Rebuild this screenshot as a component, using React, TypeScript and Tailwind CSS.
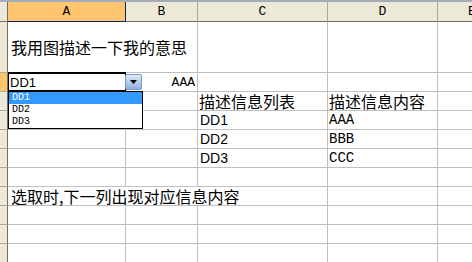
import React from "react";

const CJK = { fontFamily: '"Noto Sans CJK SC", "Noto Sans", sans-serif' };
const MONO = { fontFamily: '"Liberation Mono", "DejaVu Sans Mono", monospace' };
const SANS = { fontFamily: '"Liberation Sans", Arial, sans-serif' };

const widths = ["w-[118px]", "w-[72px]", "w-[130px]", "w-[110px]", "w-[68px]"];

function RowHead({ h, active }: { h: string; active?: boolean }) {
  return (
    <div
      className={`${h} w-[8px] shrink-0 border-r border-b border-r-[#716f64] border-b-[#aca899] ${
        active ? "bg-[#ffc46e]" : "bg-[#ece9d8]"
      }`}
    />
  );
}

function Cell({
  w,
  children,
  className = "",
  style,
}: {
  w: string;
  children?: React.ReactNode;
  className?: string;
  style?: React.CSSProperties;
}) {
  return (
    <div
      className={`${w} shrink-0 border-r border-b border-[#c0c0c0] flex items-center leading-none whitespace-nowrap text-black ${className}`}
      style={style}
    >
      {children}
    </div>
  );
}

export default function App() {
  return (
    <div className="relative w-[472px] h-[262px] overflow-hidden bg-white">
      <div className="h-[2px] bg-[#a4abbb]" />
      {/* column headers */}
      <div className="flex h-[20px]" style={MONO}>
        <div className="w-[8px] shrink-0 bg-[#ece9d8] border-r border-b border-[#716f64]" />
        <div className="w-[118px] shrink-0 bg-[#ffc46e] border-r border-b border-[#0a246a] flex items-center justify-center text-[13px] text-black">
          A
        </div>
        {["B", "C", "D"].map((l, i) => (
          <div
            key={l}
            className={`${widths[i + 1]} shrink-0 bg-[#ece9d8] border-r border-b border-r-[#aca899] border-b-[#716f64] flex items-center justify-center text-[13px] text-black`}
          >
            {l}
          </div>
        ))}
        <div className="w-[34px] shrink-0 overflow-hidden bg-[#ece9d8] border-b border-b-[#716f64] flex items-center text-[13px] text-black">
          <span className="pl-[30px]">E</span>
        </div>
      </div>

      {/* row 1 */}
      <div className="flex h-[51px]">
        <RowHead h="h-[51px]" />
        <div
          className="w-[190px] shrink-0 border-r border-b border-[#c0c0c0] flex items-center pl-[3px] text-[16px] leading-none text-black whitespace-nowrap"
          style={CJK}
        >
          我用图描述一下我的意思
        </div>
        <Cell w={widths[2]} />
        <Cell w={widths[3]} />
        <Cell w={widths[4]} />
      </div>

      {/* row 2 */}
      <div className="flex h-[19px]">
        <RowHead h="h-[19px]" active />
        <Cell w={widths[0]} />
        <Cell w={widths[1]} className="justify-end pr-[2px] text-[13px]" style={MONO}>
          AAA
        </Cell>
        <Cell w={widths[2]} />
        <Cell w={widths[3]} />
        <Cell w={widths[4]} />
      </div>

      {/* row 3 */}
      <div className="flex h-[19px]">
        <RowHead h="h-[19px]" />
        <Cell w={widths[0]} />
        <Cell w={widths[1]} />
        <Cell w={widths[2]} className="pl-[1px] text-[16px]" style={CJK}>
          描述信息列表
        </Cell>
        <Cell w={widths[3]} className="pl-[1px] text-[16px]" style={CJK}>
          描述信息内容
        </Cell>
        <Cell w={widths[4]} />
      </div>

      {[
        ["DD1", "AAA"],
        ["DD2", "BBB"],
        ["DD3", "CCC"],
      ].map(([a, b]) => (
        <div key={a} className="flex h-[19px]">
          <RowHead h="h-[19px]" />
          <Cell w={widths[0]} />
          <Cell w={widths[1]} />
          <Cell w={widths[2]} className="pl-[2px] text-[14px]" style={SANS}>
            {a}
          </Cell>
          <Cell w={widths[3]} className="pl-[1px] text-[14px]" style={MONO}>
            {b}
          </Cell>
          <Cell w={widths[4]} />
        </div>
      ))}

      {/* row 7 */}
      <div className="flex h-[19px]">
        <RowHead h="h-[19px]" />
        {widths.map((w, i) => (
          <Cell key={i} w={w} />
        ))}
      </div>

      {/* row 8 */}
      <div className="flex h-[19px]">
        <RowHead h="h-[19px]" />
        <div
          className="w-[320px] shrink-0 border-r border-b border-[#c0c0c0] flex items-center pl-[3px] text-[16px] leading-none text-black whitespace-nowrap"
          style={CJK}
        >
          选取时,下一列出现对应信息内容
        </div>
        <Cell w={widths[3]} />
        <Cell w={widths[4]} />
      </div>

      {[0, 1, 2].map((r) => (
        <div key={r} className="flex h-[19px]">
          <RowHead h="h-[19px]" />
          {widths.map((w, i) => (
            <Cell key={i} w={w} />
          ))}
        </div>
      ))}

      {/* combo box overlay */}
      <div
        className="absolute left-[8px] top-[72px] w-[118px] h-[19px] bg-white border border-black border-t-2 flex items-center pl-[1px] text-[13px] leading-none text-black"
        style={SANS}
      >
        DD1
      </div>
      <div className="absolute left-[125px] top-[74px] w-[17px] h-[16px] rounded-[2px] border border-[#7a9cc4] bg-gradient-to-b from-[#dce9f8] to-[#8db2da] flex items-center justify-center">
        <svg width="7" height="4" viewBox="0 0 7 4">
          <path d="M0 0H7L3.5 4Z" fill="#000" />
        </svg>
      </div>
      <div
        className="absolute left-[8px] top-[91px] w-[135px] h-[38px] bg-white border border-black flex flex-col text-[10px] leading-none text-black"
        style={MONO}
      >
        <div className="h-[12px] bg-[#3399ff] text-white flex items-center pl-[3px]">DD1</div>
        <div className="h-[12px] flex items-center pl-[3px]">DD2</div>
        <div className="h-[12px] flex items-center pl-[3px]">DD3</div>
      </div>
    </div>
  );
}
